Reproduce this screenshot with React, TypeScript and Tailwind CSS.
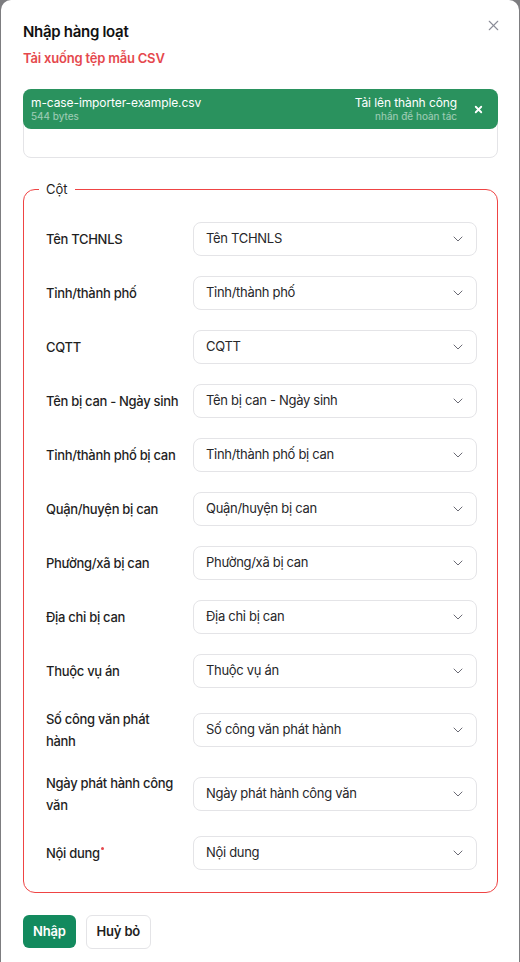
import { ChevronDown, X } from 'lucide-react';

const fields: { label: string; option: string; required?: boolean }[] = [
  { label: 'Tên TCHNLS', option: 'Tên TCHNLS' },
  { label: 'Tỉnh/thành phố', option: 'Tỉnh/thành phố' },
  { label: 'CQTT', option: 'CQTT' },
  { label: 'Tên bị can - Ngày sinh', option: 'Tên bị can - Ngày sinh' },
  { label: 'Tỉnh/thành phố bị can', option: 'Tỉnh/thành phố bị can' },
  { label: 'Quận/huyện bị can', option: 'Quận/huyện bị can' },
  { label: 'Phường/xã bị can', option: 'Phường/xã bị can' },
  { label: 'Địa chỉ bị can', option: 'Địa chỉ bị can' },
  { label: 'Thuộc vụ án', option: 'Thuộc vụ án' },
  { label: 'Số công văn phát\nhành', option: 'Số công văn phát hành' },
  { label: 'Ngày phát hành công\nvăn', option: 'Ngày phát hành công văn' },
  { label: 'Nội dung', option: 'Nội dung', required: true },
];

function FieldRow({ label, option, required }: { label: string; option: string; required?: boolean }) {
  return (
    <div className="flex items-center">
      <div className="w-[147px] shrink-0 whitespace-pre text-[13px] font-medium leading-[22px] tracking-[-0.3px] text-[#1f1f1f]">
        {label}
        {required && <span className="relative -top-[6px] ml-[1px] inline-block h-[3px] w-[3px] rounded-full bg-[#e5484d] align-middle" />}
      </div>
      <button className="flex h-[34px] flex-1 items-center justify-between rounded-lg border border-[#e4e4e7] bg-white pl-3 pr-[10px] text-left text-[13px] tracking-[-0.3px] text-[#27272a]">
        <span>{option}</span>
        <ChevronDown className="h-4 w-4 text-[#6b6b75]" strokeWidth={1.5} />
      </button>
    </div>
  );
}

export default function App() {
  return (
    <div className="min-h-[962px] bg-[#7d7d80] pl-[1px] pr-[1px]" style={{ fontFamily: 'Inter, "Noto Sans", sans-serif' }}>
      <div className="relative min-h-[962px] rounded-t-[10px] bg-white pl-[22px] pr-[21px] pt-[22px] pb-6">
        <button className="absolute right-[17px] top-[17px] text-[#8b8d98]">
          <X className="h-[17px] w-[17px]" strokeWidth={1.5} />
        </button>
        <h2 className="text-[15px] font-semibold leading-5 tracking-[-0.3px] text-[#111]">Nhập hàng loạt</h2>
        <a className="mt-[6px] block text-[13px] font-semibold leading-5 tracking-[-0.2px] text-[#e5484d]">Tải xuống tệp mẫu CSV</a>

        <div className="mt-[21px] h-[69px] rounded-lg border border-[#e4e4e7]">
          <div className="-mx-px -mt-px flex h-[40px] items-center justify-between rounded-lg bg-[#2a925e] pl-[8px] pr-[14px] text-white">
            <div className="leading-none">
              <div className="text-[12px] leading-[14px] tracking-[-0.1px]">m-case-importer-example.csv</div>
              <div className="text-[10px] leading-[13px] text-white/55">544 bytes</div>
            </div>
            <div className="flex items-center gap-[16px]">
              <div className="text-right">
                <div className="text-[12px] leading-[14px] tracking-[-0.1px]">Tải lên thành công</div>
                <div className="text-[10px] leading-[13px] text-white/55">nhấn để hoàn tác</div>
              </div>
              <X className="h-[11px] w-[11px]" strokeWidth={4} />
            </div>
          </div>
        </div>

        <fieldset className="mt-[21px] rounded-xl border border-[#ef4444] pl-[22px] pr-[20px] pt-[23px] pb-[22px]">
          <legend className="-ml-[7px] px-[7px] text-[13px] leading-5 text-[#1f1f1f]">Cột</legend>
          <div className="flex flex-col gap-5">
            {fields.map((f) => (
              <FieldRow key={f.option} label={f.label} option={f.option} required={f.required} />
            ))}
          </div>
        </fieldset>

        <div className="mt-[22px] flex gap-[10px]">
          <button className="h-[33px] rounded-md bg-[#138a5e] px-[10px] text-[13px] font-semibold tracking-[-0.2px] text-white">Nhập</button>
          <button className="h-[34px] rounded-md border border-[#e4e4e7] bg-white px-[10px] text-[13px] font-semibold tracking-[-0.2px] text-[#1f1f1f]">Huỷ bỏ</button>
        </div>
      </div>
    </div>
  );
}
